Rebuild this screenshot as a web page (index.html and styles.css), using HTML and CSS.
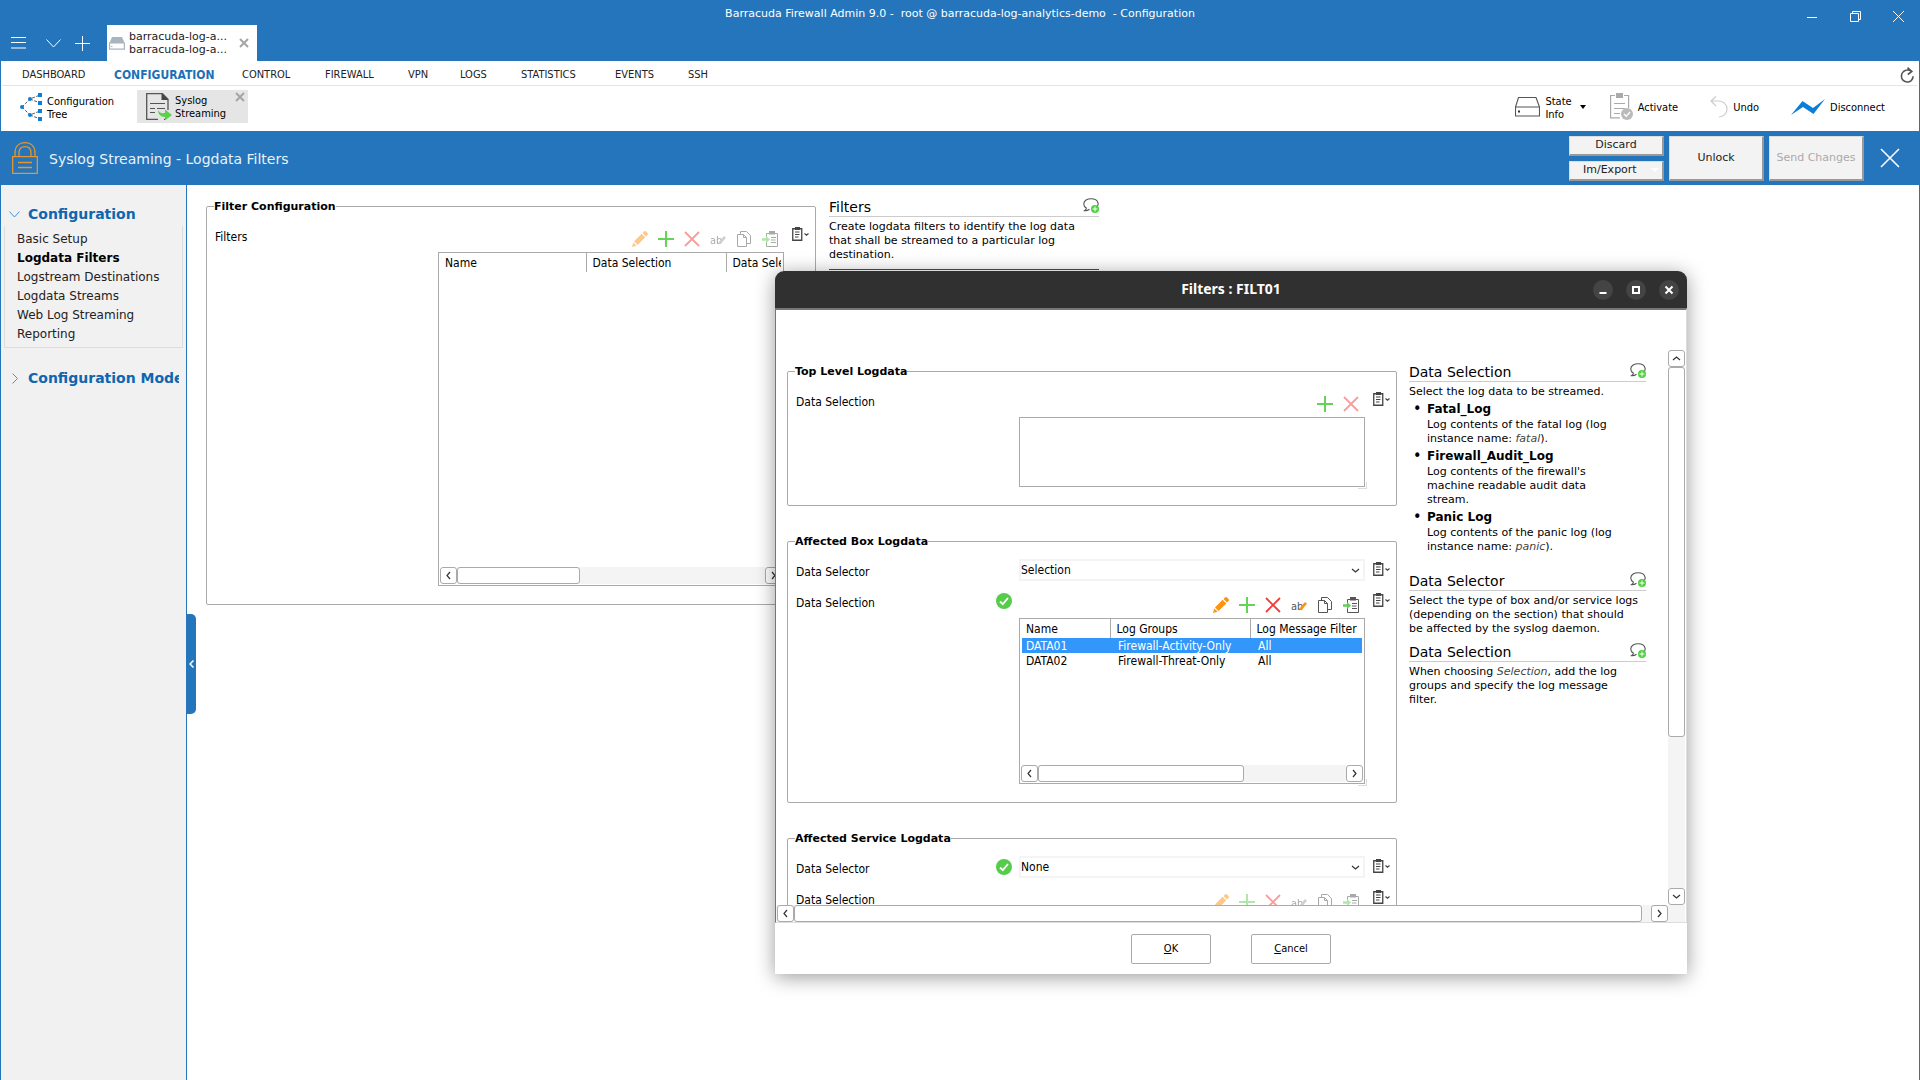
FILE: index.html
```html
<!DOCTYPE html>
<html lang="en">
  <head>
    <meta charset="UTF-8" />
    <meta name="viewport" content="width=device-width, initial-scale=1.0" />
    <title>Barracuda Firewall Admin</title>
    <link rel="stylesheet" href="styles.css">
  </head>
  <body>
    <!-- shared icons -->
    <svg class="sprite" width="0" height="0" aria-hidden="true">
      <symbol id="i-pencil" viewBox="0 0 16 16">
        <path d="M0 16l1.2-4.6 3.4 3.4zM2 10.4l7.6-7.6 3.6 3.6-7.6 7.6zM10.5 2l1.6-1.6c.5-.5 1.3-.5 1.8 0l1.7 1.7c.5.5.5 1.3 0 1.8L14 5.500z" fill="#ff9310"/>
      </symbol>
      <symbol id="i-plus" viewBox="0 0 16 16">
        <path d="M8 0v16M0 8h16" stroke="#64d356" stroke-width="2"/>
      </symbol>
      <symbol id="i-cross" viewBox="0 0 16 16">
        <path d="M1 1l14 14M15 1L1 15" stroke="#f43b3b" stroke-width="1.800"/>
      </symbol>
      <symbol id="i-rename" viewBox="0 0 16 16">
        <text x="0" y="13" font-size="11" font-family="DejaVu Sans Condensed, DejaVu Sans, sans-serif" fill="#555">ab</text>
        <path d="M8.500 13.500l1-3.500L14 5l2 1.800-4.500 5.200z" fill="#ff9310"/>
      </symbol>
      <symbol id="i-copy" viewBox="0 0 16 16">
        <path d="M1.500 3.500h6l3 3v9h-9zM7.500 3.500v3h3M4.500 3V.5h6l4 4v8h-3.500" fill="none" stroke="#555"/>
      </symbol>
      <symbol id="i-paste" viewBox="0 0 16 16">
        <path d="M4.500 6V2.500h11v13h-11V11M9 6.500h5M9 9h4.500M9 11.500h5" fill="none" stroke="#555"/>
        <path d="M7 0h6v3.500H7z" fill="#555"/>
        <path d="M0 7.200h4V5l4 3.500L4 12V9.800H0z" fill="#5fd350"/>
      </symbol>
      <symbol id="i-clip" viewBox="0 0 17 14">
        <path d="M.75 1.750h9v11.500h-9z" fill="none" stroke="#444" stroke-width="1.300"/>
        <path d="M3 0h5v3H3z" fill="#444"/>
        <path d="M3 5h4.500M3 7.500h4.500M3 10h3.500" stroke="#444"/>
        <path d="M12.500 6.500l2 1.700 2-1.700" fill="none" stroke="#444" stroke-width="1.200"/>
      </symbol>
      <symbol id="i-ok" viewBox="0 0 16 16">
        <circle cx="8" cy="8" r="8" fill="#55cc4a"/>
        <path d="M4 8.500l2.800 2.700L12 5" fill="none" stroke="#fff" stroke-width="1.800"/>
      </symbol>
      <symbol id="i-note" viewBox="0 0 16 15">
        <path d="M14.500 8c.6-.9.800-1.700.600-2.700C14.600 2.500 11.600.7 8 .7S1 2.700.8 5.600C.7 7.500 1.700 9 3.300 9.900c.2 1-.5 1.900-1.800 2.700 2 .2 3.500-.3 5-1.400" fill="none" stroke="#555" stroke-width="1.100"/>
        <circle cx="12" cy="11" r="4" fill="#4fd03e"/>
        <path d="M12 8.500v5M9.500 11h5" stroke="#fff"/>
      </symbol>
      <symbol id="i-left" viewBox="0 0 9 9"><path d="M6 1L3 4.500 6 8" fill="none" stroke="#333" stroke-width="1.200"/></symbol>
      <symbol id="i-right" viewBox="0 0 9 9"><path d="M3 1l3 3.500L3 8" fill="none" stroke="#333" stroke-width="1.200"/></symbol>
      <symbol id="i-up" viewBox="0 0 9 9"><path d="M1 6l3.500-3L8 6" fill="none" stroke="#333" stroke-width="1.200"/></symbol>
      <symbol id="i-down" viewBox="0 0 9 9"><path d="M1 3l3.500 3L8 3" fill="none" stroke="#333" stroke-width="1.200"/></symbol>
      <symbol id="i-close" viewBox="0 0 10 10"><path d="M1 1l8 8M9 1L1 9" stroke="#a5a5a5" stroke-width="2"/></symbol>
    </svg>

    <!-- window title and session tab -->
    <header class="titlebar">
      <div class="tabs">
        <button class="plain" aria-label="Menu"><svg width="15" height="12" viewBox="0 0 15 12"><path d="M0 .5h15M0 5.500h15M0 11h15" stroke="#fff"/></svg></button>
        <button class="plain" aria-label="Sessions"><svg width="15" height="9" viewBox="0 0 15 9"><path d="M.5.5l7 7.500 7-7.500" fill="none" stroke="#fff"/></svg></button>
        <button class="plain" aria-label="New session"><svg width="15" height="15" viewBox="0 0 15 15"><path d="M7.500 0v15M0 7.500h15" stroke="#fff"/></svg></button>
        <div class="session">
          <svg width="16" height="13" viewBox="0 0 16 13"><path d="M3 0h10l2.500 6H.5z" fill="#a9b4bf"/><path d="M.6 6h14.800v6.200H.6z" fill="#fff" stroke="#a9b4bf" stroke-width="1.200"/><path d="M2 9.500h1.500" stroke="#a9b4bf"/></svg>
          <span class="session-name">barracuda-log-a...<br>barracuda-log-a...</span>
          <button class="plain" aria-label="Close session"><svg width="10" height="10"><use href="#i-close"/></svg></button>
        </div>
      </div>
      <div class="window-title">Barracuda Firewall Admin 9.0 -&nbsp; root @ barracuda-log-analytics-demo&nbsp; - Configuration</div>
      <div class="window-buttons">
        <button class="plain" aria-label="Minimize"><svg width="11" height="11" viewBox="0 0 11 11"><path d="M0 6.500h10" stroke="#fff"/></svg></button>
        <button class="plain" aria-label="Restore"><svg width="11" height="11" viewBox="0 0 11 11"><path d="M.5 2.500h8v8h-8zM2.500 2V.5h8v8H9" fill="none" stroke="#fff"/></svg></button>
        <button class="plain" aria-label="Close"><svg width="11" height="11" viewBox="0 0 11 11"><path d="M0 0l11 11M11 0L0 11" stroke="#fff"/></svg></button>
      </div>
    </header>

    <div class="window">
      <nav class="menu">
        <a href="#">DASHBOARD</a>
        <a href="#" class="active">CONFIGURATION</a>
        <a href="#">CONTROL</a>
        <a href="#">FIREWALL</a>
        <a href="#">VPN</a>
        <a href="#">LOGS</a>
        <a href="#">STATISTICS</a>
        <a href="#">EVENTS</a>
        <a href="#">SSH</a>
        <button class="plain refresh" aria-label="Refresh"><svg width="14" height="16" viewBox="0 0 14 16"><path d="M11.500 4.500C9.500 2.800 6 2.600 3.500 4.500 1 6.700.8 10.500 2.600 12.800c2.200 2.700 6.200 2.800 8.600.8 1.300-1.200 1.900-2.600 1.900-4.400M7.500.7l4.300 3.800-4 3" fill="none" stroke="#555" stroke-width="1.600"/></svg></button>
      </nav>

      <div class="toolbar">
        <button class="tool tree">
          <svg width="22" height="28" viewBox="0 0 22 28"><path d="M2 14l8-8 10-4M10 6l10 4M2 14l8 8 10-4M10 22l10 4" fill="none" stroke="#555" stroke-dasharray="3 1.500"/><g fill="#0a7fd8"><circle cx="2" cy="14" r="2"/><circle cx="10" cy="6" r="2"/><circle cx="10" cy="22" r="2"/><path d="M18 0h4v4h-4zM18 8h4v4h-4zM18 16h4v4h-4zM18 24h4v4h-4z"/></g></svg>
          <span>Configuration<br>Tree</span>
        </button>
        <div class="tool-tab">
          <button class="tool">
            <svg width="26" height="27" viewBox="0 0 26 27"><path d="M12 26.300H.7V.7h15.800l5.500 5.500V17M18 26.300h1" fill="none" stroke="#555" stroke-width="1.300"/><path d="M15.500 0l7 7h-7z" fill="#444"/><path d="M4 10.500h15M4 15.500h5M11 15.500h8M4 19.500h5" stroke="#555" stroke-width="1.200"/><path d="M12 17c1 2.500 3 3.500 7 3v-3.500l7 5.500-7 5.500V24c-4.500 0-7-3-7-7z" fill="#5ad24c"/></svg>
            <span>Syslog<br>Streaming</span>
          </button>
          <button class="plain" aria-label="Close tab"><svg width="10" height="10"><use href="#i-close"/></svg></button>
        </div>
        <div class="tools-right">
          <button class="tool state">
            <svg width="25" height="20" viewBox="0 0 25 20"><path d="M3.500.5h17.500l3.500 9.500H.5zM.5 10h24v9H.5z" fill="none" stroke="#555" stroke-width="1.100"/><path d="M3 14.500h2" stroke="#333" stroke-width="2"/></svg>
            <span>State<br>Info</span>
            <svg width="6" height="4" viewBox="0 0 6 4"><path d="M0 0h6L3 4z"/></svg>
          </button>
          <button class="tool">
            <svg width="23" height="27" viewBox="0 0 23 27"><path d="M5 2.500H.6v22.400H10M14 2.500h4.600V15M4 10.500h11M4 15.500h11M4 20.500h6" fill="none" stroke="#aaa" stroke-width="1.200"/><path d="M6 0h7v5H6z" fill="#aaa"/><circle cx="17" cy="21" r="6" fill="#bbb"/><path d="M14 21l2.300 2.300L20 19" fill="none" stroke="#fff" stroke-width="1.300"/></svg>
            <span>Activate</span>
          </button>
          <button class="tool undo">
            <svg width="18" height="22" viewBox="0 0 18 22"><path d="M6 .5L1 5l5 5M1 5h7c5 0 9 3 9 8 0 4.500-3.500 8-8 8" fill="none" stroke="#ccc" stroke-width="1.200"/></svg>
            <span>Undo</span>
          </button>
          <button class="tool">
            <svg width="34" height="16" viewBox="0 0 34 16"><path d="M0 16L11.500 2l10.500 7L34 0 22.500 15 12 8z" fill="#0a7fd8"/></svg>
            <span>Disconnect</span>
          </button>
        </div>
      </div>

      <div class="page-head">
        <svg width="26" height="32" viewBox="0 0 26 32"><path d="M.7 14.700h24.600v16.600H.7zM3 14.500V11C3 4.500 7 .7 13 .7S23 4.500 23 11v3.500M7 14.500V11c0-4.200 2.200-6.300 6-6.300s6 2.100 6 6.300v3.500M6 20.500h14M6 25.500h14" fill="none" stroke="#e8952b" stroke-width="1.300"/></svg>
        <h1>Syslog Streaming - Logdata Filters</h1>
        <div class="stack">
          <button class="raised">Discard</button>
          <button class="raised drop">Im/Export<svg width="8" height="4" viewBox="0 0 8 4"><path d="M0 0h8L4 4z" fill="#fff"/></svg></button>
        </div>
        <button class="raised tall">Unlock</button>
        <button class="raised tall" disabled>Send Changes</button>
        <button class="plain page-close" aria-label="Close page"><svg width="20" height="20" viewBox="0 0 20 20"><path d="M1 1l18 18M19 1L1 19" stroke="#fff" stroke-width="1.600"/></svg></button>
      </div>

      <div class="main">
        <aside class="sidebar">
          <h2><svg width="11" height="7" viewBox="0 0 11 7"><path d="M.5.5l5 5.500 5-5.500" fill="none" stroke="#4a90cf"/></svg>Configuration</h2>
          <ul>
            <li><a href="#">Basic Setup</a></li>
            <li><a href="#" class="active">Logdata Filters</a></li>
            <li><a href="#">Logstream Destinations</a></li>
            <li><a href="#">Logdata Streams</a></li>
            <li><a href="#">Web Log Streaming</a></li>
            <li><a href="#">Reporting</a></li>
          </ul>
          <h2><svg width="11" height="11" viewBox="0 0 11 11"><path d="M3.500.5l5 5-5 5" fill="none" stroke="#4a90cf"/></svg>Configuration Mode</h2>
        </aside>

        <section class="content">
          <button class="collapse" aria-label="Collapse sidebar"><svg width="5" height="8" viewBox="0 0 5 8"><path d="M4.500.5L1 4l3.500 3.500" fill="none" stroke="#fff" stroke-width="1.500"/></svg></button>
          <fieldset class="group">
            <legend>Filter Configuration</legend>
            <div class="row">
              <span class="label">Filters</span>
              <div class="control">
                <div class="actions">
                  <button class="plain off" aria-label="Edit"><svg><use href="#i-pencil"/></svg></button>
                  <button class="plain" aria-label="Add"><svg><use href="#i-plus"/></svg></button>
                  <button class="plain off" aria-label="Delete"><svg><use href="#i-cross"/></svg></button>
                  <button class="plain off grey" aria-label="Rename"><svg><use href="#i-rename"/></svg></button>
                  <button class="plain off" aria-label="Copy"><svg><use href="#i-copy"/></svg></button>
                  <button class="plain off" aria-label="Paste"><svg><use href="#i-paste"/></svg></button>
                </div>
                <div class="list filters-list">
                  <table>
                    <thead><tr><th class="name">Name</th><th class="mid">Data Selection</th><th>Data Selection</th></tr></thead>
                  </table>
                  <div class="hscroll">
                    <button class="arrow" aria-label="Scroll left"><svg><use href="#i-left"/></svg></button>
                    <div class="track"><div class="thumb"></div></div>
                    <button class="arrow" aria-label="Scroll right"><svg><use href="#i-right"/></svg></button>
                  </div>
                </div>
              </div>
              <button class="plain clip" aria-label="Clipboard"><svg><use href="#i-clip"/></svg></button>
            </div>
          </fieldset>

          <div class="help main-help">
            <h3>Filters<svg><use href="#i-note"/></svg></h3>
            <p>Create logdata filters to identify the log data that shall be streamed to a particular log destination.</p>
          </div>
        </section>
      </div>
    </div>

    <!-- dialog window -->
    <div class="dialog" role="dialog" aria-labelledby="dialog-title">
      <header class="dialog-head">
        <h2 id="dialog-title">Filters : FILT01</h2>
        <div class="dialog-buttons">
          <button aria-label="Minimize"><svg viewBox="0 0 10 10"><path d="M1.500 8h7" stroke="#fff" stroke-width="2"/></svg></button>
          <button aria-label="Maximize"><svg viewBox="0 0 10 10"><path d="M2 2h6v6H2z" fill="none" stroke="#fff" stroke-width="2"/></svg></button>
          <button aria-label="Close"><svg viewBox="0 0 10 10"><path d="M1.500 1.500l7 7M8.500 1.500l-7 7" stroke="#fff" stroke-width="2"/></svg></button>
        </div>
      </header>
      <div class="dialog-body">
        <div class="pane">
          <div class="pane-view">
            <div class="groups">
              <fieldset class="group">
                <legend>Top Level Logdata</legend>
                <div class="row">
                  <span class="label">Data Selection</span>
                  <div class="control">
                    <div class="actions">
                      <button class="plain" aria-label="Add"><svg><use href="#i-plus"/></svg></button>
                      <button class="plain off" aria-label="Delete"><svg><use href="#i-cross"/></svg></button>
                    </div>
                    <div class="list short-list grip"></div>
                  </div>
                  <button class="plain clip" aria-label="Clipboard"><svg><use href="#i-clip"/></svg></button>
                </div>
              </fieldset>

              <fieldset class="group">
                <legend>Affected Box Logdata</legend>
                <div class="row">
                  <label class="label" for="box-selector">Data Selector</label>
                  <div class="control select">
                    <select id="box-selector"><option>Selection</option></select>
                    <svg><use href="#i-down"/></svg>
                  </div>
                  <button class="plain clip" aria-label="Clipboard"><svg><use href="#i-clip"/></svg></button>
                </div>
                <div class="row">
                  <span class="label">Data Selection<svg><use href="#i-ok"/></svg></span>
                  <div class="control">
                    <div class="actions">
                      <button class="plain" aria-label="Edit"><svg><use href="#i-pencil"/></svg></button>
                      <button class="plain" aria-label="Add"><svg><use href="#i-plus"/></svg></button>
                      <button class="plain" aria-label="Delete"><svg><use href="#i-cross"/></svg></button>
                      <button class="plain" aria-label="Rename"><svg><use href="#i-rename"/></svg></button>
                      <button class="plain" aria-label="Copy"><svg><use href="#i-copy"/></svg></button>
                      <button class="plain" aria-label="Paste"><svg><use href="#i-paste"/></svg></button>
                    </div>
                    <div class="list data-list grip">
                      <table>
                        <thead><tr><th class="name">Name</th><th class="mid">Log Groups</th><th>Log Message Filter</th></tr></thead>
                        <tbody>
                          <tr class="selected"><td>DATA01</td><td>Firewall-Activity-Only</td><td>All</td></tr>
                          <tr><td>DATA02</td><td>Firewall-Threat-Only</td><td>All</td></tr>
                        </tbody>
                      </table>
                      <div class="hscroll">
                        <button class="arrow" aria-label="Scroll left"><svg><use href="#i-left"/></svg></button>
                        <div class="track"><div class="thumb"></div></div>
                        <button class="arrow" aria-label="Scroll right"><svg><use href="#i-right"/></svg></button>
                      </div>
                    </div>
                  </div>
                  <button class="plain clip" aria-label="Clipboard"><svg><use href="#i-clip"/></svg></button>
                </div>
              </fieldset>

              <fieldset class="group">
                <legend>Affected Service Logdata</legend>
                <div class="row">
                  <label class="label" for="service-selector">Data Selector<svg><use href="#i-ok"/></svg></label>
                  <div class="control select">
                    <select id="service-selector"><option>None</option></select>
                    <svg><use href="#i-down"/></svg>
                  </div>
                  <button class="plain clip" aria-label="Clipboard"><svg><use href="#i-clip"/></svg></button>
                </div>
                <div class="row">
                  <span class="label">Data Selection</span>
                  <div class="control">
                    <div class="actions">
                      <button class="plain off" aria-label="Edit"><svg><use href="#i-pencil"/></svg></button>
                      <button class="plain off" aria-label="Add"><svg><use href="#i-plus"/></svg></button>
                      <button class="plain off" aria-label="Delete"><svg><use href="#i-cross"/></svg></button>
                      <button class="plain off grey" aria-label="Rename"><svg><use href="#i-rename"/></svg></button>
                      <button class="plain off" aria-label="Copy"><svg><use href="#i-copy"/></svg></button>
                      <button class="plain off" aria-label="Paste"><svg><use href="#i-paste"/></svg></button>
                    </div>
                    <div class="list short-list"></div>
                  </div>
                  <button class="plain clip" aria-label="Clipboard"><svg><use href="#i-clip"/></svg></button>
                </div>
              </fieldset>
            </div>

            <div class="help">
              <h3>Data Selection<svg><use href="#i-note"/></svg></h3>
              <p>Select the log data to be streamed.</p>
              <ul>
                <li><b>Fatal_Log</b><p>Log contents of the fatal log (log instance name: <i>fatal</i>).</p></li>
                <li><b>Firewall_Audit_Log</b><p>Log contents of the firewall's machine readable audit data stream.</p></li>
                <li><b>Panic Log</b><p>Log contents of the panic log (log instance name: <i>panic</i>).</p></li>
              </ul>
              <h3>Data Selector<svg><use href="#i-note"/></svg></h3>
              <p>Select the type of box and/or service logs (depending on the section) that should be affected by the syslog daemon.</p>
              <h3>Data Selection<svg><use href="#i-note"/></svg></h3>
              <p>When choosing <i>Selection</i>, add the log groups and specify the log message filter.</p>
            </div>
          </div>
          <div class="vscroll">
            <button class="arrow" aria-label="Scroll up"><svg><use href="#i-up"/></svg></button>
            <div class="track"><div class="thumb"></div></div>
            <button class="arrow" aria-label="Scroll down"><svg><use href="#i-down"/></svg></button>
          </div>
        </div>
        <div class="hscroll pane-hscroll">
          <button class="arrow" aria-label="Scroll left"><svg><use href="#i-left"/></svg></button>
          <div class="track"><div class="thumb"></div></div>
          <button class="arrow" aria-label="Scroll right"><svg><use href="#i-right"/></svg></button>
        </div>
      </div>
      <footer class="dialog-foot">
        <button><u>O</u>K</button>
        <button><u>C</u>ancel</button>
      </footer>
    </div>
  </body>
</html>
```
FILE: styles.css
```css
* {
  margin: 0;
  padding: 0;
  box-sizing: border-box;
  list-style: none;
}
body {
  display: flex;
  flex-direction: column;
  height: 100vh;
  overflow: hidden;
  position: relative;
  background: #2475bb;
  color: #000;
  font: 12px/14px "DejaVu Sans Condensed", "DejaVu Sans", sans-serif;
}
.sprite {
  position: absolute;
}
button, select {
  font: inherit;
  color: inherit;
}
a {
  color: inherit;
  text-decoration: none;
}
svg {
  display: block;
  flex: none;
}
.plain {
  display: block;
  border: 0;
  background: none;
  cursor: pointer;
}

/* title bar */
.titlebar {
  display: grid;
  grid-template-columns: 1fr auto 1fr;
  height: 61px;
  color: #fff;
}
.tabs {
  display: flex;
  align-items: center;
  align-self: end;
  gap: 14px;
  height: 36px;
  padding-left: 11px;
}
.tabs > .plain:first-child {
  margin-right: 6px;
}
.session {
  display: flex;
  align-items: center;
  gap: 4px;
  width: 150px;
  height: 36px;
  margin-left: 3px;
  padding: 0 8px 0 2px;
  background: #fff;
  color: #222;
}
.session-name {
  flex: 1;
  font: 11px/13px "DejaVu Sans", sans-serif;
  white-space: nowrap;
}
.window-title {
  padding-top: 7px;
  font: 11px/14px "DejaVu Sans", sans-serif;
}
.window-buttons {
  display: flex;
  justify-content: flex-end;
  gap: 32px;
  padding: 11px 16px 0 0;
  height: 22px;
}
.window {
  display: flex;
  flex-direction: column;
  flex: 1;
  margin: 0 1px;
  background: #fff;
}

/* main menu */
.menu {
  display: grid;
  grid-template-columns: 92px 128px 83px 83px 52px 61px 94px 73px 1fr auto;
  align-items: center;
  height: 25px;
  margin: 0 2px 0 1px;
  padding: 4px 3px 0 20px;
  border-bottom: 1px solid #e4e4e4;
  font-size: 11px;
  color: #222;
}
.menu .active {
  color: #1c70b8;
  font-size: 12px;
  font-weight: bold;
}

/* toolbar */
.toolbar {
  display: flex;
  height: 45px;
  padding: 4px 34px 8px 19px;
  font-size: 11px;
  line-height: 13px;
}
.tool {
  display: flex;
  align-items: center;
  gap: 5px;
  border: 0;
  background: none;
  text-align: left;
}
.tool span {
  padding-top: 2px;
}
.tree {
  margin-right: 25px;
  width: 92px;
}
.tool-tab {
  display: flex;
  align-items: flex-start;
  justify-content: space-between;
  width: 111px;
  padding: 2px 3px 0 9px;
  background: #e5e5e5;
}
.tool-tab .tool {
  gap: 3px;
}
.tools-right {
  display: flex;
  align-items: center;
  gap: 32px;
  margin-left: auto;
}
.state svg:last-child {
  margin-left: 3px;
}
.tools-right .tool:nth-child(2) {
  margin-left: -8px;
}

/* blue page header */
.page-head {
  display: flex;
  align-items: center;
  gap: 5px;
  height: 54px;
  padding: 0 19px 0 11px;
  background: #2475bb;
}
.page-head h1 {
  flex: 1;
  margin-left: 6px;
  padding-top: 2px;
  color: #eaf2f9;
  font: 14px/18px "DejaVu Sans", sans-serif;
}
.stack {
  display: flex;
  flex-direction: column;
  gap: 5px;
}
.raised {
  width: 95px;
  height: 20px;
  border: 1px solid #dcdcdc;
  border-right: 2px solid #999;
  border-bottom: 2px solid #999;
  background: #f3f3f3;
  color: #222;
  font: 11px/14px "DejaVu Sans", sans-serif;
}
.raised.tall {
  height: 45px;
}
.raised:disabled {
  color: #aaa;
}
.drop {
  display: flex;
  align-items: center;
  justify-content: space-between;
  padding: 0 3px 0 13px;
}
.page-close {
  margin-left: 11px;
}

/* sidebar */
.main {
  display: flex;
  flex: 1;
}
.sidebar {
  width: 186px;
  padding: 18px 7px 0 3px;
  background: #f1f1f1;
  border-right: 1px solid #2475bb;
}
.sidebar h2 {
  display: flex;
  align-items: center;
  gap: 8px;
  height: 23px;
  padding-left: 5px;
  overflow: hidden;
  color: #0e66b0;
  font: bold 14px/23px "DejaVu Sans", sans-serif;
  white-space: nowrap;
}
.sidebar ul {
  margin: 0 -4px 19px 0;
  padding: 4px 0 3px 12px;
  border: 1px solid #dcdcdc;
  border-top: 0;
}
.sidebar a {
  color: #222;
  font: 12px/19px "DejaVu Sans", sans-serif;
}
.sidebar li {
  height: 19px;
}
.sidebar .active {
  color: #000;
  font-weight: bold;
}

/* content */
.content {
  display: flex;
  align-items: flex-start;
  gap: 13px;
  flex: 1;
  position: relative;
  padding: 13px 0 0 19px;
}
.collapse {
  position: absolute;
  left: 0;
  top: 429px;
  width: 9px;
  height: 100px;
  padding-left: 2px;
  border: 0;
  border-radius: 0 5px 5px 0;
  background: #2475bb;
}
.group {
  width: 610px;
  padding: 10px 8px 18px;
  border: 1px solid #aaa;
  border-radius: 2px;
}
.group + .group {
  margin-top: 27px;
}
.group legend {
  margin-left: -1px;
  padding-top: 1px;
  font: bold 11px/15px "DejaVu Sans", sans-serif;
}
.row {
  display: grid;
  grid-template-columns: 223px 346px 18px;
  align-items: start;
}
.row + .row {
  margin-top: 5px;
}
.label {
  display: flex;
  align-items: center;
  justify-content: space-between;
  padding-right: 7px;
  line-height: 26px;
}
.label svg {
  width: 16px;
  height: 16px;
  margin-bottom: 4px;
}
.clip {
  margin: 3px 0 0 8px;
}
.clip svg {
  width: 17px;
  height: 14px;
}
.actions {
  display: flex;
  align-items: center;
  justify-content: flex-end;
  gap: 10px;
  height: 28px;
  padding: 2px 6px 0 0;
}
.actions svg {
  width: 16px;
  height: 16px;
}
.off {
  opacity: .5;
}
.grey {
  filter: grayscale(1);
}
.list {
  display: flex;
  flex-direction: column;
  justify-content: space-between;
  position: relative;
  height: 70px;
  border: 1px solid #aaa;
}
.grip::after {
  content: "";
  position: absolute;
  right: -3px;
  bottom: -3px;
  width: 8px;
  height: 6px;
  border: 1px solid #ddd;
  border-width: 0 1px 1px 0;
}
.filters-list {
  height: 334px;
}
.data-list {
  height: 166px;
}
.list table {
  width: calc(100% - 4px);
  margin-left: 2px;
  border-collapse: collapse;
  table-layout: fixed;
}
.list th {
  height: 19px;
  padding: 1px 0 0 6px;
  border-left: 1px solid #aaa;
  font-weight: normal;
  text-align: left;
  white-space: nowrap;
  overflow: hidden;
}
.list th:first-child {
  border: 0;
  padding-left: 4px;
}
.name {
  width: 145px;
}
.data-list .name {
  width: 88px;
}
.mid {
  width: 140px;
}
.list td {
  height: 15px;
  padding-left: 8px;
}
.list td:first-child {
  padding-left: 4px;
}
.selected {
  background: #3296fb;
  color: #fff;
}
.select {
  position: relative;
}
.select select {
  display: block;
  width: 100%;
  height: 22px;
  border: 2px solid #f4f4f4;
  background: #fff;
  appearance: none;
}
.select svg {
  position: absolute;
  right: 5px;
  top: 7px;
  width: 9px;
  height: 9px;
}

/* scroll bars */
.hscroll {
  display: flex;
  height: 17px;
  padding: 0 1px;
}
.list .hscroll {
  margin-bottom: 1px;
}
.vscroll {
  display: flex;
  flex-direction: column;
  width: 17px;
}
.arrow {
  display: flex;
  align-items: center;
  justify-content: center;
  width: 17px;
  height: 17px;
  border: 1px solid #aaa;
  border-radius: 3px;
  background: #fff;
}
.arrow svg {
  width: 9px;
  height: 9px;
}
.track {
  flex: 1;
  background: #f4f4f4;
}
.thumb {
  width: 40%;
  height: 100%;
  border: 1px solid #aaa;
  border-radius: 3px;
  background: #fff;
}
.data-list .thumb {
  width: 67%;
}
.vscroll .thumb {
  width: 100%;
  height: 71%;
}
.pane-hscroll .thumb {
  width: 99%;
}

/* help texts */
.help {
  width: 237px;
}
.main-help {
  width: 270px;
  border-bottom: 1px solid #0d5aa0;
  padding-bottom: 7px;
}
.help h3 {
  display: flex;
  justify-content: space-between;
  height: 19px;
  margin-bottom: 3px;
  border-bottom: 1px solid #ccc;
  font: 14px/18px "DejaVu Sans", sans-serif;
}
.help h3 svg {
  width: 16px;
  height: 15px;
}
.help p {
  padding-right: 7px;
  font: 11px/14px "DejaVu Sans", sans-serif;
}
.help p + h3 {
  margin-top: 7px;
}
.help ul + h3 {
  margin-top: 18px;
}
.help li {
  margin: 3px 0 0 18px;
}
.help li::before {
  content: "•";
  float: left;
  margin-left: -14px;
  font-size: 16px;
}
.help li p {
  margin-top: 2px;
  padding-right: 20px;
}
.help b {
  font-family: "DejaVu Sans", sans-serif;
}
.help i {
  color: #444;
}

/* dialog */
.dialog {
  position: absolute;
  left: 775px;
  top: 271px;
  width: 912px;
  border-radius: 9px 9px 0 0;
  background: #fff;
  box-shadow: 0 3px 20px rgba(0, 0, 0, .4);
}
.dialog-head {
  display: flex;
  align-items: center;
  height: 37px;
  border-radius: 9px 9px 0 0;
  background: #303030;
  color: #fff;
}
.dialog-head h2 {
  flex: 1;
  padding: 0 0 2px 94px;
  font: bold 14px/20px "Noto Sans", "Open Sans", sans-serif;
  text-align: center;
}
.dialog-buttons {
  display: flex;
  gap: 13px;
  padding-right: 8px;
}
.dialog-buttons button {
  display: flex;
  align-items: center;
  justify-content: center;
  width: 20px;
  height: 20px;
  border: 0;
  border-radius: 50%;
  background: #444;
}
.dialog-buttons svg {
  width: 10px;
  height: 10px;
}
.dialog-body {
  padding: 40px 1px 0 0;
  border: 1px solid #ddd;
  border-top: 2px solid #777;
  border-left-color: #777;
}
.pane {
  display: flex;
  height: 555px;
}
.pane-view {
  display: flex;
  align-items: flex-start;
  gap: 12px;
  flex: 1;
  padding: 13px 0 0 11px;
  overflow: hidden;
}
.pane-hscroll {
  padding-right: 17px;
  background: #f4f4f4;
}
.dialog-foot {
  display: flex;
  justify-content: center;
  gap: 40px;
  padding: 11px 0 10px;
}
.dialog-foot button {
  width: 80px;
  height: 30px;
  border: 1px solid #aaa;
  border-radius: 2px;
  background: #fff;
  font-size: 11px;
}
```
